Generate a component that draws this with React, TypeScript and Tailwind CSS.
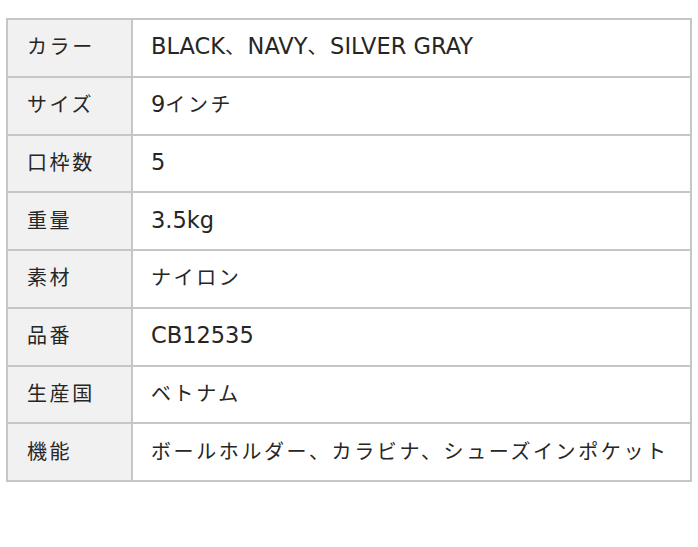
const specs: [string, string][] = [
  ["カラー", "BLACK、NAVY、SILVER GRAY"],
  ["サイズ", "9インチ"],
  ["口枠数", "5"],
  ["重量", "3.5kg"],
  ["素材", "ナイロン"],
  ["品番", "CB12535"],
  ["生産国", "ベトナム"],
  ["機能", "ボールホルダー、カラビナ、シューズインポケット"],
];

// split into japanese / latin runs so each gets its own font settings
function Runs({ text }: { text: string }) {
  const parts = text.match(/[\u3000-\u30ff\u4e00-\u9fff]+|[^\u3000-\u30ff\u4e00-\u9fff]+/g) || [];
  return (
    <span className="leading-[28px]">
      {parts.map((p, i) =>
        /[\u3000-\u30ff\u4e00-\u9fff]/.test(p) ? (
          <span key={i} className="font-['Noto_Sans_CJK_JP',sans-serif] text-[20px] tracking-[2.6px]">
            {p}
          </span>
        ) : (
          <span key={i} className="font-['DejaVu_Sans',sans-serif] text-[22.5px]">
            {p}
          </span>
        )
      )}
    </span>
  );
}

export default function App() {
  return (
    <div className="h-[547px] w-[698px] bg-white pl-[6px] pt-[18px] text-[20px] text-[#262626]">
      {/* Spec table */}
      <div className="w-[686px] border-2 border-[#c6c6c6]">
        {specs.map(([label, value], i) => (
          <div
            key={label}
            className={`box-content grid h-[55.75px] grid-cols-[123px_1fr] ${i > 0 ? "border-t-2 border-[#c6c6c6]" : ""}`}
          >
            <div className="flex items-center bg-[#f1f1f1] pb-[2px] pl-[19px]">
              <Runs text={label} />
            </div>
            <div className="flex items-center border-l-2 border-[#c6c6c6] pb-[2px] pl-[18px] whitespace-nowrap">
              <Runs text={value} />
            </div>
          </div>
        ))}
      </div>
    </div>
  );
}
